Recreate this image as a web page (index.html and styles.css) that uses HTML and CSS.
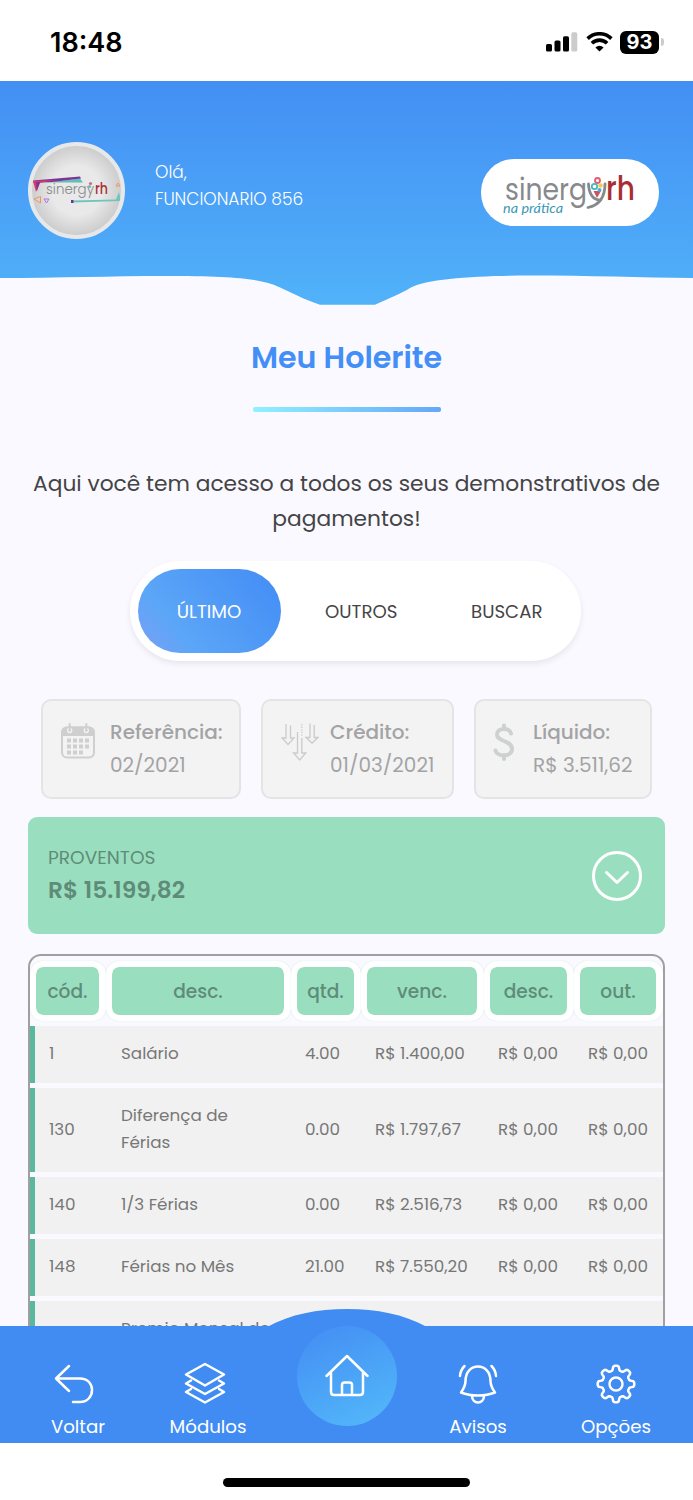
FILE: index.html
```html
<!DOCTYPE html>
<html lang="pt-BR">
<head>
    <meta charset="UTF-8">
    <meta name="viewport" content="width=device-width, initial-scale=1.0">
    <title>Meu Holerite</title>
    <link rel="stylesheet" href="styles.css">
</head>
<body>
    <div class="app">
        <div class="status-bar">
            <span class="time">18:48</span>
            <div class="status-icons">
                <svg width="32" height="20" viewBox="0 0 32 20">
                    <rect x="0" y="12" width="6" height="7.5" rx="1.6"/>
                    <rect x="8.5" y="8.5" width="6" height="11" rx="1.6"/>
                    <rect x="17" y="4.2" width="6" height="15.3" rx="1.6"/>
                    <rect x="25.3" y="0.3" width="6" height="19.2" rx="1.6" fill="#ccc"/>
                </svg>
                <svg class="wifi" width="27" height="20" viewBox="0 0 27 20">
                    <path d="M1.6 6.6a17 17 0 0 1 23.8 0M5.9 11.2a11 11 0 0 1 15.2 0" fill="none" stroke="#000" stroke-width="3.6"/>
                    <path d="M13.5 19.6l-4.1-4.2a6 6 0 0 1 8.2 0z"/>
                </svg>
                <span class="battery">93</span>
                <span class="battery-tip"></span>
            </div>
        </div>

        <header class="header">
            <svg class="wave" width="693" height="225" viewBox="0 0 693 225">
                <defs>
                    <linearGradient id="sky" x1="0" y1="0" x2="0" y2="1">
                        <stop offset="0" stop-color="#438ff4"/>
                        <stop offset="1" stop-color="#51b2f9"/>
                    </linearGradient>
                </defs>
                <path fill="url(#sky)" d="M0 0H693V197C640 196.500 590 194.500 530 194.500C480 194.500 428 197 410 207C402 212 390 217 375 223.700H320C303 218 290 211 279 206C262 198 235 195 165 195C110 195 60 197 0 197Z"/>
            </svg>
            <div class="user">
                <div class="avatar">
                    <svg width="89" height="89" viewBox="0 0 89 89">
                        <path d="M28 35L48 32.500L51 36.500L8 36.500Z" fill="#5fc0b5"/>
                        <path d="M1 34.500L48 30.500L49 32.500L20 36L1 36.500Z" fill="#7b3594"/>
                        <path d="M1 35L24 34L8 37L4 46Z" fill="#d83a6c"/>
                        <path d="M4 36H8L5 45Z" fill="#7b3594"/>
                        <path d="M40 54.500L84 53.500L87 46L89 55L40 56.500Z" fill="#6fc4bd"/>
                        <path d="M39 54h2.500v3h-2.500z" fill="#6c3593"/>
                        <path d="M2 53L8.500 50.500V57Z M84 40l2-3 2 3z" fill="none" stroke="#ef9660"/>
                        <path d="M12 53h5l-2.500 4z" fill="none" stroke="#b673dd"/>
                        <text x="14" y="47.500" class="logo-text avatar-name" textLength="48" lengthAdjust="spacingAndGlyphs">sinergy</text>
                        <text x="63" y="47.500" class="logo-text avatar-name logo-red" textLength="13" lengthAdjust="spacingAndGlyphs">rh</text>
                        <circle cx="58.500" cy="37.500" r="1.600" fill="#e06478"/>
                        <circle cx="57.500" cy="40.500" r="1.600" fill="#5fc0c5"/>
                    </svg>
                </div>
                <div class="hello">
                    <span>Olá,</span>
                    <span>FUNCIONARIO 856</span>
                </div>
            </div>
            <div class="company">
                <svg width="178" height="67" viewBox="0 0 178 67">
                    <text x="24" y="41" class="logo-text company-name" textLength="82" lengthAdjust="spacingAndGlyphs">sinerg</text>
                    <path d="M107.500 25C108 34 111 40 118 41M124 25C124 37 119 46 107 48.500" fill="none" stroke="#87898c" stroke-width="2.800" stroke-linecap="round"/>
                    <text x="125" y="41" class="logo-text company-name logo-red" textLength="29" lengthAdjust="spacingAndGlyphs">rh</text>
                    <path d="M112.500 32L116 39L120 32Z" fill="#c95560"/>
                    <circle cx="116.500" cy="21.500" r="2.500" fill="#fff" stroke="#e65b70" stroke-width="1.800"/>
                    <circle cx="113.500" cy="27.500" r="2.700" fill="#fff" stroke="#45b8c4" stroke-width="1.800"/>
                    <circle cx="119.500" cy="26.500" r="2.300" fill="#f0cb55"/>
                    <circle cx="118.500" cy="31" r="2" fill="#53a8d5"/>
                    <text x="22" y="53.500" class="tagline" textLength="60" lengthAdjust="spacingAndGlyphs">na prática</text>
                </svg>
            </div>
        </header>

        <main class="content">
            <h1 class="title">Meu Holerite</h1>
            <div class="title-line"></div>
            <p class="intro">Aqui você tem acesso a todos os seus demonstrativos de<br>pagamentos!</p>

            <div class="tabs">
                <span class="tab tab-active">ÚLTIMO</span>
                <span class="tab">OUTROS</span>
                <span class="tab">BUSCAR</span>
            </div>

            <div class="cards">
                <div class="card card-ref">
                    <svg class="card-icon" width="34" height="36" viewBox="0 0 34 36">
                        <rect x="1" y="4.500" width="32" height="30" rx="5" fill="none" stroke="#cfcfd0" stroke-width="2"/>
                        <path d="M0 13V9.500a6 6 0 0 1 6-6h22a6 6 0 0 1 6 6V13z" fill="#cfcfd0"/>
                        <circle cx="8.700" cy="7.500" r="2" fill="none" stroke="#f3f3f3" stroke-width="1.300"/>
                        <circle cx="25.300" cy="7.500" r="2" fill="none" stroke="#f3f3f3" stroke-width="1.300"/>
                        <path d="M8.700 1v6M25.300 1v6" stroke="#cfcfd0" stroke-width="2" stroke-linecap="round"/>
                        <path d="M6 17.500h23M6 23.500h23M6 29.500h17" stroke="#cfcfd0" stroke-width="4" stroke-dasharray="4 2"/>
                    </svg>
                    <div><b>Referência:</b><span>02/2021</span></div>
                </div>
                <div class="card card-cred">
                    <svg class="card-icon" width="38" height="38" viewBox="0 0 38 38" fill="none" stroke="#cbcbcc" stroke-width="1.300">
                        <path d="M5 1v14H1l6 6.500 6-6.500H9.500V2.500"/>
                        <path d="M29 0.500v14h-4l6 5.500 6-5.500h-3.800V2"/>
                        <path d="M16.500 9v21h-4l6.200 7 6-7h-3.900V15"/>
                        <path d="M20.800 1v13" stroke-dasharray="1.300 1.300"/>
                    </svg>
                    <div><b>Crédito:</b><span>01/03/2021</span></div>
                </div>
                <div class="card card-liq">
                    <svg class="card-icon" width="22" height="38" viewBox="0 0 22 38" fill="none" stroke="#cfd0d0" stroke-width="4" stroke-linecap="round">
                        <path d="M18 10.500C17 4.500 4 4 4 11.500C4 19 19 17 19 26C19 34.500 4 34 2.500 27.500M11 2.500V6M11 32V36"/>
                    </svg>
                    <div><b>Líquido:</b><span>R$ 3.511,62</span></div>
                </div>
            </div>

            <section class="earnings">
                <div class="earnings-text">
                    <span class="earnings-label">PROVENTOS</span>
                    <strong class="earnings-value">R$ 15.199,82</strong>
                </div>
                <svg width="50" height="50" viewBox="0 0 50 50" fill="none" stroke="#fff" stroke-width="3" stroke-linecap="round" stroke-linejoin="round">
                    <circle cx="25" cy="25" r="23.500"/>
                    <path d="M14.500 21.500L25 31.500L35.500 21.500"/>
                </svg>
            </section>

            <div class="table">
                <div class="row row-head">
                    <span>cód.</span><span>desc.</span><span>qtd.</span><span>venc.</span><span>desc.</span><span>out.</span>
                </div>
                <div class="row">
                    <span>1</span><span>Salário</span><span>4.00</span><span>R$ 1.400,00</span><span>R$ 0,00</span><span>R$ 0,00</span>
                </div>
                <div class="row">
                    <span>130</span><span>Diferença de<br>Férias</span><span>0.00</span><span>R$ 1.797,67</span><span>R$ 0,00</span><span>R$ 0,00</span>
                </div>
                <div class="row">
                    <span>140</span><span>1/3 Férias</span><span>0.00</span><span>R$ 2.516,73</span><span>R$ 0,00</span><span>R$ 0,00</span>
                </div>
                <div class="row">
                    <span>148</span><span>Férias no Mês</span><span>21.00</span><span>R$ 7.550,20</span><span>R$ 0,00</span><span>R$ 0,00</span>
                </div>
                <div class="row">
                    <span></span><span>Premio Mensal de<br>&nbsp;</span><span></span><span></span><span></span><span></span>
                </div>
            </div>
        </main>

        <nav class="navbar">
            <svg class="bump" width="160" height="18" viewBox="0 0 160 18">
                <path d="M0 18C24 5 50 0 80 0S136 5 160 18Z" fill="#418cf2"/>
            </svg>
            <a class="nav-item nav-back">
                <svg width="40" height="40" viewBox="0 0 40 40">
                    <path d="M15 2L2 14.500L15 27M2 14.500H26C34 14.500 38 20 38 26S34 38 26 38H19"/>
                </svg>
                <span>Voltar</span>
            </a>
            <a class="nav-item nav-modules">
                <svg width="42" height="42" viewBox="0 0 42 42">
                    <path d="M21 2L40 12.500L21 23.500L2 12.500Z"/>
                    <path d="M7 18.500L2 21.500L21 32L40 21.500L35 18.500"/>
                    <path d="M7 27L2 30L21 40.500L40 30L35 27"/>
                </svg>
                <span>Módulos</span>
            </a>
            <a class="nav-home">
                <svg width="44" height="44" viewBox="0 0 44 44">
                    <path d="M1.500 22L22 2L42.500 22M6 18V38Q6 41 9 41H35Q38 41 38 38V18M17 41V31Q17 28.500 19.500 28.500H24.500Q27 28.500 27 31V41"/>
                </svg>
            </a>
            <a class="nav-item nav-alerts">
                <svg width="40" height="40" viewBox="0 0 40 40">
                    <path d="M7.500 17C7.500 -2.500 32.500 -2.500 32.500 17C32.500 22 34.500 25 37 28.500C27 32.500 13 32.500 3 28.500C5.500 25 7.500 22 7.500 17Z"/>
                    <path d="M14 32C14 40.500 26 40.500 26 32M2 12Q2.500 6 6.500 2M38 12Q37.500 6 33.500 2"/>
                </svg>
                <span>Avisos</span>
            </a>
            <a class="nav-item nav-options">
                <svg width="40" height="40" viewBox="0 0 40 40">
                    <circle cx="20" cy="20" r="6.500"/>
                    <path id="gear" d=""/>
                </svg>
                <span>Opções</span>
            </a>
        </nav>
        <div class="home-area"><span class="home-indicator"></span></div>
    </div>

    <script>
        // eight rounded teeth around the centre of the options icon
        const points = [];
        for (let i = 0; i <= 160; i++) {
            const angle = i / 160 * Math.PI * 2;
            const wave = Math.tanh(2.2 * Math.cos(angle * 8)) / Math.tanh(2.2);
            const radius = 16 + 2.3 * wave;
            points.push((20 + radius * Math.sin(angle)).toFixed(2) + ' ' + (20 - radius * Math.cos(angle)).toFixed(2));
        }
        document.getElementById('gear').setAttribute('d', 'M' + points.join('L') + 'Z');
    </script>
</body>
</html>
```
FILE: styles.css
```css
* {
    box-sizing: border-box;
}

body {
    margin: 0;
    font-family: Poppins, Inter, "Open Sans", sans-serif;
    background-color: #fff;
    color: #444;
}

.app {
    width: 693px;
    height: 1500px;
    display: flex;
    flex-direction: column;
    overflow: hidden;
}

/* phone status bar */
.status-bar {
    height: 81px;
    flex: none;
    display: flex;
    justify-content: space-between;
    padding: 25px 29px 0 50px;
    font-family: Inter, sans-serif;
}

.time {
    font-size: 27px;
    line-height: 35px;
    font-weight: 600;
    color: #000;
}

.status-icons {
    display: flex;
    align-items: center;
    height: 34px;
}

.wifi {
    margin: 0 7px 0 8px;
}

.battery {
    width: 39px;
    height: 23px;
    border-radius: 6px;
    background-color: #000;
    color: #fff;
    font-size: 20px;
    font-weight: 700;
    line-height: 23px;
    text-align: center;
}

.battery-tip {
    width: 3px;
    height: 8px;
    margin-left: 2px;
    border-radius: 0 3px 3px 0;
    background-color: #ccc;
}

/* header */
.header {
    position: relative;
    height: 224px;
    flex: none;
    background-color: #faf9ff;
    display: flex;
    justify-content: space-between;
    align-items: flex-start;
    padding: 61px 34px 0 28px;
}

.wave {
    position: absolute;
    left: 0;
    top: 0;
}

.user {
    position: relative;
    display: flex;
}

.avatar {
    width: 97px;
    height: 97px;
    border: 4px solid #e6e8ea;
    border-radius: 50%;
    background: radial-gradient(circle closest-side, #e9e9e9 55%, #cdcdcd 100%);
    overflow: hidden;
}

.avatar svg {
    display: block;
}

.hello {
    display: flex;
    flex-direction: column;
    padding: 17px 0 0 30px;
    color: #fff;
    font-size: 17px;
    line-height: 27px;
    font-weight: 300;
}

.company {
    position: relative;
    width: 178px;
    height: 67px;
    margin-top: 17px;
    border-radius: 33px;
    background-color: #fff;
}

.logo-text {
    fill: #87898c;
}

.avatar-name {
    font-size: 15px;
    font-weight: 300;
}

.company-name {
    font-size: 31px;
    font-weight: 400;
}

.logo-red {
    fill: #a92e33;
    font-weight: 500;
}

.company-name.logo-red {
    font-size: 33px;
}

.tagline {
    font-family: Lato, sans-serif;
    font-style: italic;
    font-size: 13px;
    fill: #3b97b5;
}

/* page content */
.content {
    flex: 1;
    min-height: 0;
    overflow: hidden;
    background-color: #faf9ff;
    display: flex;
    flex-direction: column;
    align-items: center;
}

.title {
    margin: 30px 0 0;
    font-size: 30.1px;
    line-height: 45px;
    font-weight: 600;
    color: #438ff7;
}

.title-line {
    width: 188px;
    height: 5px;
    flex: none;
    margin-top: 27px;
    border-radius: 2px;
    background: linear-gradient(90deg, #90f1ff, #64a7f8);
}

.intro {
    margin: 54px 0 0;
    font-size: 21.75px;
    line-height: 35px;
    text-align: center;
    white-space: nowrap;
}

.tabs {
    width: 451px;
    height: 100px;
    flex: none;
    margin: 25px 0 0 17px;
    padding: 8px;
    display: flex;
    border-radius: 50px;
    background-color: #fff;
    box-shadow: 0 3px 6px rgba(0, 0, 0, 0.08);
}

.tab {
    width: 145.5px;
    height: 84px;
    flex: none;
    line-height: 85px;
    text-align: center;
    font-size: 18.2px;
}

.tab-active {
    width: 143px;
    margin-right: 8px;
    border-radius: 42px;
    color: #fff;
    background: linear-gradient(50deg, #7b9ff5 0%, #5ba6f7 28%, #468ff6 90%);
}

.cards {
    display: flex;
    gap: 20px;
    margin-top: 38px;
}

.card {
    height: 100px;
    display: flex;
    padding: 15px 0 0 18px;
    border: 2px solid #e4e4e4;
    border-radius: 10px;
    background-color: #f3f3f3;
    color: #a3a3a5;
    font-size: 20px;
    line-height: 33px;
    white-space: nowrap;
}

.card-icon {
    flex: none;
    margin-top: 7px;
}

.card b,
.card span {
    display: block;
}

.card b {
    font-weight: 500;
}

.card-ref {
    width: 200px;
    gap: 15px;
}

.card-cred {
    width: 193px;
    gap: 11px;
}

.card-liq {
    width: 178px;
    padding-left: 17px;
    gap: 18px;
}

.earnings {
    width: 637px;
    height: 117px;
    flex: none;
    margin-top: 18px;
    padding: 0 23px 0 20px;
    display: flex;
    justify-content: space-between;
    align-items: center;
    border-radius: 9px;
    background-color: #99dfbf;
    color: #5f8c79;
}

.earnings-text {
    padding-bottom: 3px;
}

.earnings-label,
.earnings-value {
    display: block;
    line-height: 33px;
}

.earnings-label {
    font-size: 18.6px;
}

.earnings-value {
    font-size: 23.3px;
    font-weight: 600;
}

/* payslip table */
.table {
    width: 637px;
    flex: none;
    margin-top: 20px;
    padding-top: 5px;
    border: 2px solid #a0a0a0;
    border-bottom: 0;
    border-radius: 13px 13px 0 0;
}

.row {
    display: grid;
    grid-template-columns: 72px 184px 70px 123px 90px 1fr;
    align-items: center;
    margin-bottom: 5px;
    padding: 14px 0 16px;
    border-left: 5px solid #5bb89f;
    background-color: #f1f1f1;
    color: #777;
    font-size: 16.75px;
    line-height: 27px;
    white-space: nowrap;
}

.row span {
    padding-left: 14px;
}

.row-head {
    grid-template-columns: 76px 185px 70px 123px 90px 89px;
    padding: 0;
    border-left: 0;
    background: none;
    color: #5f8c79;
    font-size: 18.6px;
    font-weight: 500;
}

.row-head span {
    height: 60px;
    padding: 0;
    line-height: 49px;
    text-align: center;
    border: 6px solid #fff;
    border-right-width: 7px;
    border-radius: 13px;
    background-color: #99dfbf;
    background-clip: padding-box;
    box-shadow: 0 0 1px rgba(120, 210, 180, 0.5);
}

/* bottom navigation */
.navbar {
    position: relative;
    height: 117px;
    flex: none;
    display: grid;
    grid-template-columns: 156px 104px 174px 88px 171px;
    background-color: #418cf2;
    color: #fff;
}

.bump {
    position: absolute;
    left: 267px;
    top: -17px;
}

.nav-item {
    height: 117px;
    display: flex;
    flex-direction: column;
    align-items: center;
    justify-content: flex-end;
    gap: 9px;
    font-size: 18.2px;
    line-height: 27px;
}

.navbar a svg {
    fill: none;
    stroke: #fff;
    stroke-width: 2.5;
    stroke-linecap: round;
    stroke-linejoin: round;
}

.nav-item span {
    margin-bottom: 3px;
}

.nav-back svg {
    margin-right: 9px;
}

.nav-modules svg {
    margin-right: 7px;
}

.nav-options {
    padding-left: 17px;
}

.nav-home {
    position: relative;
    width: 100px;
    height: 100px;
    justify-self: center;
    display: flex;
    align-items: center;
    justify-content: center;
    border-radius: 50%;
    background: linear-gradient(155deg, #4491f4 10%, #52b5f9 90%);
}

.home-area {
    height: 57px;
    flex: none;
    display: flex;
    justify-content: center;
    padding-top: 35px;
}

.home-indicator {
    width: 247px;
    height: 9px;
    border-radius: 5px;
    background-color: #000;
}
```
